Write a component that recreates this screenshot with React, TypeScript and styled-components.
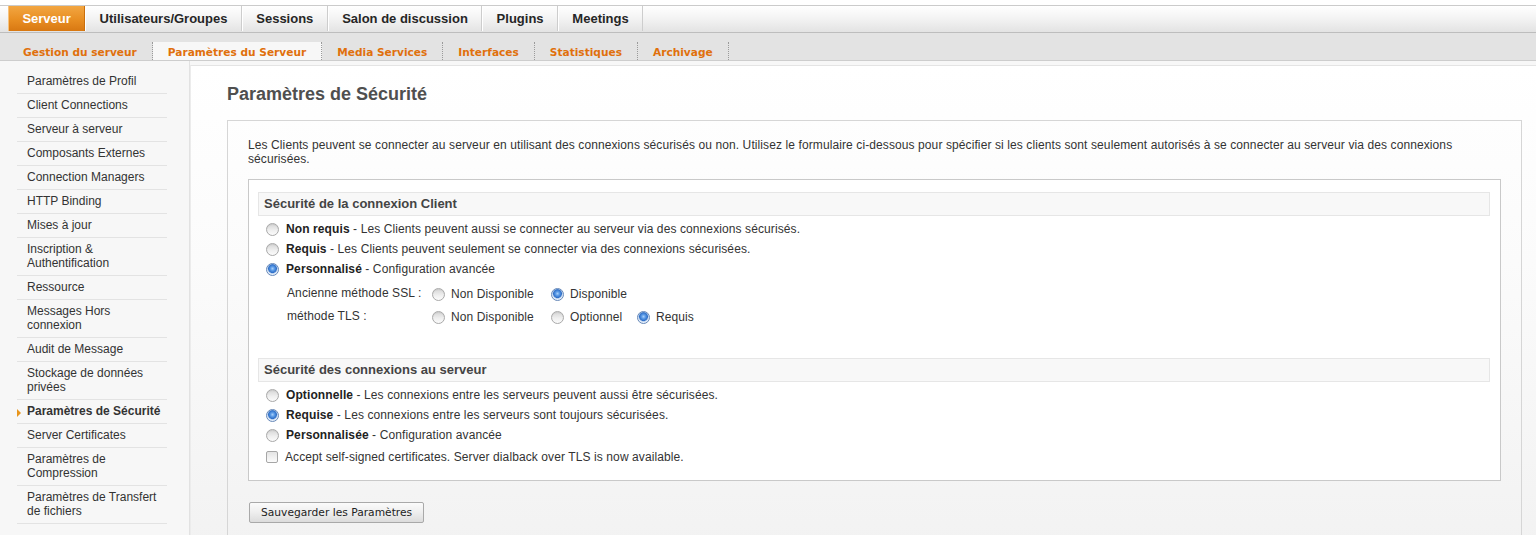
import React from "react";
import styled, { createGlobalStyle } from "styled-components";

const GlobalStyle = createGlobalStyle`
  html, body { margin: 0; padding: 0; }
  body {
    background: #f7f7f7;
    font-family: "Liberation Sans", Arial, sans-serif;
    font-size: 12px;
    color: #333;
  }
`;

const Page = styled.div`
  width: 1536px;
  min-height: 535px;
  background: #f7f7f7;
`;

const TopStrip = styled.div`
  background: #fff;
  padding-top: 5px;
`;

const MainNav = styled.nav`
  display: flex;
  height: 26px;
  padding-left: 8px;
  border-top: 1px solid #cbcbcb;
  border-bottom: 1px solid #bdbdbd;
  background: linear-gradient(#ffffff, #f4f4f4 45%, #e3e3e3);
`;

const NavTab = styled.div<{ $active?: boolean }>`
  padding: 0 13.4px;
  line-height: 25px;
  font-weight: bold;
  font-size: 13px;
  color: ${(p) => (p.$active ? "#fff" : "#262626")};
  border-left: 1px solid ${(p) => (p.$active ? "#f7c27c" : "#fff")};
  border-right: 1px solid ${(p) => (p.$active ? "#c96e0c" : "#cdcdcd")};
  background: ${(p) =>
    p.$active ? "linear-gradient(#f2a642, #e88e22 55%, #d87812)" : "transparent"};
  margin-bottom: 1px;
`;

const SubNav = styled.nav`
  display: flex;
  align-items: flex-end;
  height: 27px;
  padding-left: 8px;
  background: #e3e3e3;
  border-bottom: 1px solid #cdcdcd;
`;

const SubTab = styled.div<{ $active?: boolean }>`
  height: 18px;
  padding: 3px 15px 0;
  box-sizing: border-box;
  line-height: 15px;
  font-family: "DejaVu Sans", Verdana, sans-serif;
  font-weight: bold;
  font-size: 10.6px;
  color: #e0700c;
  background: ${(p) => (p.$active ? "#f7f7f7" : "transparent")};
  border-right: 1px dotted #9a9a9a;
`;

const Body = styled.div`
  display: flex;
  align-items: stretch;
  min-height: 473px;
`;

const Sidebar = styled.aside`
  width: 190px;
  flex: none;
  box-sizing: border-box;
  padding: 9px 0 0 17px;
  border-right: 1px solid #e2e2e2;
  background: #f7f7f7;
`;

const SideList = styled.ul`
  list-style: none;
  margin: 0;
  padding: 0;
  width: 150px;
`;

const SideItem = styled.li<{ $active?: boolean }>`
  padding: 4px 3px 5px 10px;
  line-height: 14px;
  font-size: 12px;
  color: #333;
  font-weight: ${(p) => (p.$active ? "bold" : "normal")};
  border-bottom: 1px solid #e3e3e3;
  position: relative;
`;

const SideMarker = styled.span`
  position: absolute;
  left: 0;
  top: 9px;
  width: 0;
  height: 0;
  border-top: 4px solid transparent;
  border-bottom: 4px solid transparent;
  border-left: 4px solid #e8951c;
`;

const Main = styled.main`
  flex: 1;
  margin-top: 4px;
  padding: 17px 14px 12px 36px;
  border-top: 1px solid #e4e4e4;
  border-left: 1px solid #ececec;
  background: linear-gradient(#ffffff, #fbfbfb 40%, #f2f2f2);
  letter-spacing: 0.1px;
`;

const Title = styled.h1`
  margin: 0;
  font-size: 18px;
  line-height: 22px;
  font-weight: bold;
  color: #4f4f4f;
  letter-spacing: 0;
`;

const Panel = styled.section`
  margin-top: 15px;
  padding: 17px 20px 20px;
  border: 1px solid #d6d6d6;
`;

const Intro = styled.p`
  margin: 0;
  line-height: 14px;
  color: #333;
`;

const FieldBox = styled.div`
  margin-top: 13px;
  padding: 12px 10px 13px 9px;
  border: 1px solid #c9c9c9;
  background: #fff;
`;

const Section = styled.div<{ $spaced?: boolean }>`
  margin-top: ${(p) => (p.$spaced ? "30px" : "0")};
`;

const SectionHead = styled.div`
  height: 22px;
  line-height: 22px;
  padding-left: 5px;
  border: 1px solid #e6e6e6;
  background: #f8f8f8;
  font-weight: bold;
  font-size: 13px;
  color: #444;
  letter-spacing: 0;
`;

const Options = styled.div`
  margin-top: 3px;
`;

const OptionRow = styled.div<{ $gap?: number }>`
  display: flex;
  align-items: center;
  height: 20px;
  padding-left: 8px;
  margin-top: ${(p) => (p.$gap ? `${p.$gap}px` : "0")};
  color: #333;
`;

const Radio = styled.span<{ $checked?: boolean }>`
  display: inline-block;
  box-sizing: border-box;
  flex: none;
  width: 13px;
  height: 13px;
  border-radius: 50%;
  border: 1px solid ${(p) => (p.$checked ? "#6688b8" : "#a9a9a9")};
  background: ${(p) =>
    p.$checked
      ? "radial-gradient(circle at 50% 42%, #a9d0fa 0, #5a9ae6 2px, #2f6fc8 4px, #9fbde4 4.6px, #e4eefa 5.4px, #f4f8fd 100%)"
      : "linear-gradient(#d6d6d6, #f0f0f0 60%, #fbfbfb)"};
  box-shadow: ${(p) => (p.$checked ? "none" : "inset 0 1px 1px rgba(0,0,0,0.06)")};
`;

const Check = styled.span`
  display: inline-block;
  box-sizing: border-box;
  flex: none;
  width: 12px;
  height: 12px;
  border-radius: 2px;
  border: 1px solid #a6a6a6;
  background: linear-gradient(#e4e4e4, #fbfbfb);
`;

const Label = styled.span`
  margin-left: 7px;
  white-space: nowrap;
`;

const Strong = styled.b`
  color: #222;
`;

const SubGrid = styled.div`
  display: grid;
  grid-template-columns: 145px 119px 86px auto;
  grid-auto-rows: 23px;
  justify-content: start;
  align-items: center;
  margin: 3px 0 0 29px;
  color: #333;
`;

const SubCell = styled.div`
  display: flex;
  align-items: center;
  padding-top: 1px;
`;

const SubLabel = styled.div`
  white-space: nowrap;
  padding-bottom: 2px;
`;

const SmallLabel = styled.span`
  margin-left: 6px;
  white-space: nowrap;
`;

const SaveButton = styled.button`
  margin: 21px 0 0 1px;
  height: 21px;
  padding: 0 11px;
  font-family: "DejaVu Sans", Verdana, sans-serif;
  font-size: 10.7px;
  letter-spacing: 0;
  color: #222;
  border: 1px solid #a9a9a9;
  border-radius: 2px;
  background: linear-gradient(#fbfbfb, #eeeeee 50%, #dcdcdc);
  cursor: pointer;
`;

const topTabs = ["Serveur", "Utilisateurs/Groupes", "Sessions", "Salon de discussion", "Plugins", "Meetings"];
const subTabs = ["Gestion du serveur", "Paramètres du Serveur", "Media Services", "Interfaces", "Statistiques", "Archivage"];
const sideItems = [
  "Paramètres de Profil",
  "Client Connections",
  "Serveur à serveur",
  "Composants Externes",
  "Connection Managers",
  "HTTP Binding",
  "Mises à jour",
  "Inscription & Authentification",
  "Ressource",
  "Messages Hors connexion",
  "Audit de Message",
  "Stockage de données privées",
  "Paramètres de Sécurité",
  "Server Certificates",
  "Paramètres de Compression",
  "Paramètres de Transfert de fichiers",
];

type Opt = { bold: string; text: string; checked?: boolean };

const clientOpts: Opt[] = [
  { bold: "Non requis", text: " - Les Clients peuvent aussi se connecter au serveur via des connexions sécurisés." },
  { bold: "Requis", text: " - Les Clients peuvent seulement se connecter via des connexions sécurisées." },
  { bold: "Personnalisé", text: " - Configuration avancée", checked: true },
];

const serverOpts: Opt[] = [
  { bold: "Optionnelle", text: " - Les connexions entre les serveurs peuvent aussi être sécurisées." },
  { bold: "Requise", text: " - Les connexions entre les serveurs sont toujours sécurisées.", checked: true },
  { bold: "Personnalisée", text: " - Configuration avancée" },
];

const OptionList = ({ opts }: { opts: Opt[] }) => (
  <>
    {opts.map((o) => (
      <OptionRow key={o.bold}>
        <Radio $checked={o.checked} />
        <Label>
          <Strong>{o.bold}</Strong>
          {o.text}
        </Label>
      </OptionRow>
    ))}
  </>
);

const SubOption = ({ label, checked }: { label: string; checked?: boolean }) => (
  <SubCell>
    <Radio $checked={checked} />
    <SmallLabel>{label}</SmallLabel>
  </SubCell>
);

export default function App() {
  return (
    <Page>
      <GlobalStyle />
      <TopStrip>
        <MainNav>
          {topTabs.map((t, i) => (
            <NavTab key={t} $active={i === 0}>
              {t}
            </NavTab>
          ))}
        </MainNav>
      </TopStrip>
      <SubNav>
        {subTabs.map((t, i) => (
          <SubTab key={t} $active={i === 1}>
            {t}
          </SubTab>
        ))}
      </SubNav>
      <Body>
        <Sidebar>
          <SideList>
            {sideItems.map((s) => (
              <SideItem key={s} $active={s === "Paramètres de Sécurité"}>
                {s === "Paramètres de Sécurité" && <SideMarker />}
                {s}
              </SideItem>
            ))}
          </SideList>
        </Sidebar>
        <Main>
          <Title>Paramètres de Sécurité</Title>
          <Panel>
            <Intro>
              Les Clients peuvent se connecter au serveur en utilisant des connexions sécurisés ou non. Utilisez le
              formulaire ci-dessous pour spécifier si les clients sont seulement autorisés à se connecter au serveur via
              des connexions sécurisées.
            </Intro>
            <FieldBox>
              <Section>
                <SectionHead>Sécurité de la connexion Client</SectionHead>
                <Options>
                  <OptionList opts={clientOpts} />
                </Options>
                <SubGrid>
                  <SubLabel>Ancienne méthode SSL :</SubLabel>
                  <SubOption label="Non Disponible" />
                  <SubOption label="Disponible" checked />
                  <span />
                  <SubLabel>méthode TLS :</SubLabel>
                  <SubOption label="Non Disponible" />
                  <SubOption label="Optionnel" />
                  <SubOption label="Requis" checked />
                </SubGrid>
              </Section>
              <Section $spaced>
                <SectionHead>Sécurité des connexions au serveur</SectionHead>
                <Options>
                  <OptionList opts={serverOpts} />
                  <OptionRow $gap={2}>
                    <Check />
                    <Label>Accept self-signed certificates. Server dialback over TLS is now available.</Label>
                  </OptionRow>
                </Options>
              </Section>
            </FieldBox>
            <SaveButton type="button">Sauvegarder les Paramètres</SaveButton>
          </Panel>
        </Main>
      </Body>
    </Page>
  );
}
